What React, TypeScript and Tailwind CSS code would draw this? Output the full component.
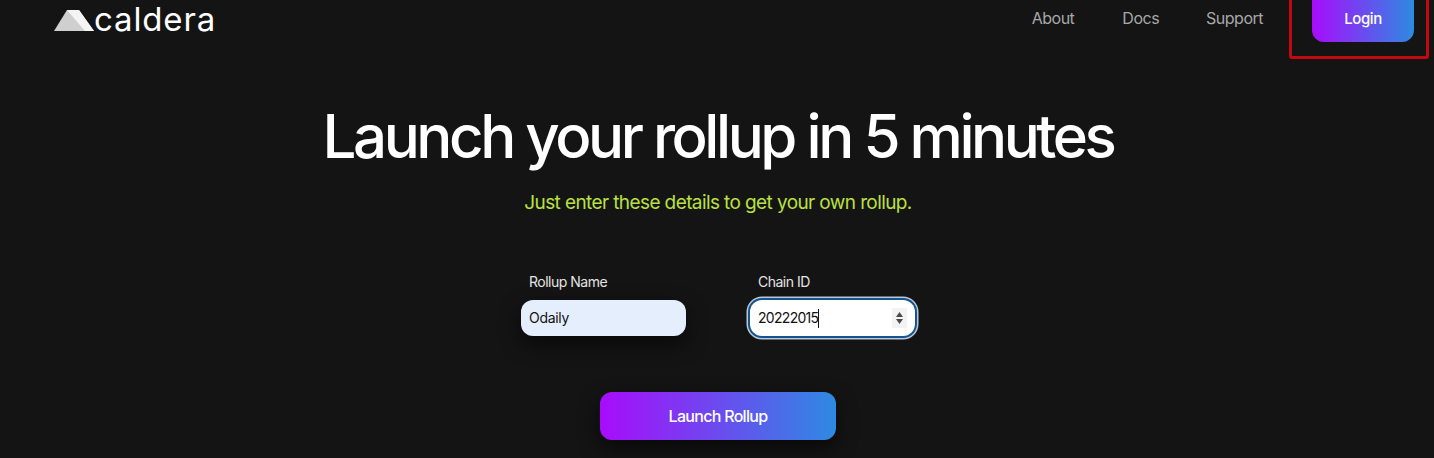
export default function App() {
  const font = "font-['Inter',sans-serif]"
  return (
    <div className={`relative h-[458px] w-[1434px] overflow-hidden bg-[#141414] ${font}`}>
      {/* header, login button runs off the top */}
      <header className="flex h-[42px] items-center justify-between pl-[54px] pr-5">
        <div className="flex items-center">
          <svg width="41" height="21" viewBox="0 0 41 21" className="mt-[-1px]">
            <polygon points="0,21 13,0 25,0 40,21" fill="#cfcfcf" />
            <polygon points="13,0 25,0 40,21 31,21" fill="#f4f4f4" />
          </svg>
          <span className="mt-[-4px] -ml-[1px] text-[33px] leading-none font-normal tracking-[0.85px] text-white">caldera</span>
        </div>
        <nav className="-mt-[6px] flex items-center">
          <a className="mr-[48px] text-base tracking-[-0.5px] text-[#a8a8a8]">About</a>
          <a className="mr-[47px] text-base tracking-[-0.5px] text-[#a8a8a8]">Docs</a>
          <a className="mr-[49px] text-base tracking-[-0.5px] text-[#a8a8a8]">Support</a>
          <button className="-mt-[8px] h-[56px] w-[102px] rounded-xl bg-linear-to-r/srgb from-[#a80cfb] to-[#2e8ae2] pt-[10px] text-[15px] font-medium tracking-[-0.4px] text-white">
            Login
          </button>
        </nav>
      </header>

      {/* annotation box */}
      <div className="absolute top-[-10px] left-[1289px] h-[69px] w-[140px] rounded-[3px] border-[3px] border-[#c4080f]" />

      <main className="flex flex-col items-center pl-[2px]">
        <h1 className="mt-[58px] text-[60px] leading-[72px] font-medium tracking-[-3.45px] text-white">
          Launch your rollup in 5 minutes
        </h1>
        <p className="mt-[19px] text-[19px] leading-6 tracking-[-0.6px] text-[#bbe040]">
          Just enter these details to get your own rollup.
        </p>

        <div className="mt-[57px] flex gap-[64px]">
          <div className="w-[165px]">
            <label className="block pl-2 text-sm leading-5 tracking-[-0.5px] text-[#e4e4e4]">Rollup Name</label>
            <div className="mt-2 flex h-9 items-center rounded-xl bg-[#e5eefc] pl-2 text-sm tracking-[-0.3px] text-[#111111] shadow-[0_8px_20px_rgba(0,0,0,0.6)]">
              Odaily
            </div>
          </div>
          <div className="w-[165px]">
            <label className="block pl-2 text-sm leading-5 tracking-[-0.5px] text-[#e4e4e4]">Chain ID</label>
            <div className="mt-2 flex h-9 items-center justify-between rounded-xl bg-white pr-[8px] pl-[8px] text-sm tracking-[-0.7px] text-[#111111] shadow-[0_0_0_2px_#15548c,0_0_0_3.5px_#b9c8da]">
              <span className="flex items-center">
                20222015
                <span className="h-[19px] w-px bg-[#111111]" />
              </span>
              <span className="flex h-5 w-[15px] items-center justify-center bg-[#f3f3f3]">
                <svg width="9" height="14" viewBox="0 0 9 14" fill="#4a4a4a">
                  <polygon points="4.5,1 8,6 1,6" />
                  <polygon points="1,8 8,8 4.5,13" />
                </svg>
              </span>
            </div>
          </div>
        </div>

        <button className="mt-[56px] h-12 w-[236px] rounded-xl bg-linear-to-r/srgb from-[#a80cfb] to-[#2e8ae2] text-base font-medium tracking-[-0.7px] text-white shadow-[0_8px_20px_rgba(0,0,0,0.6)]">
          Launch Rollup
        </button>
      </main>
    </div>
  )
}
